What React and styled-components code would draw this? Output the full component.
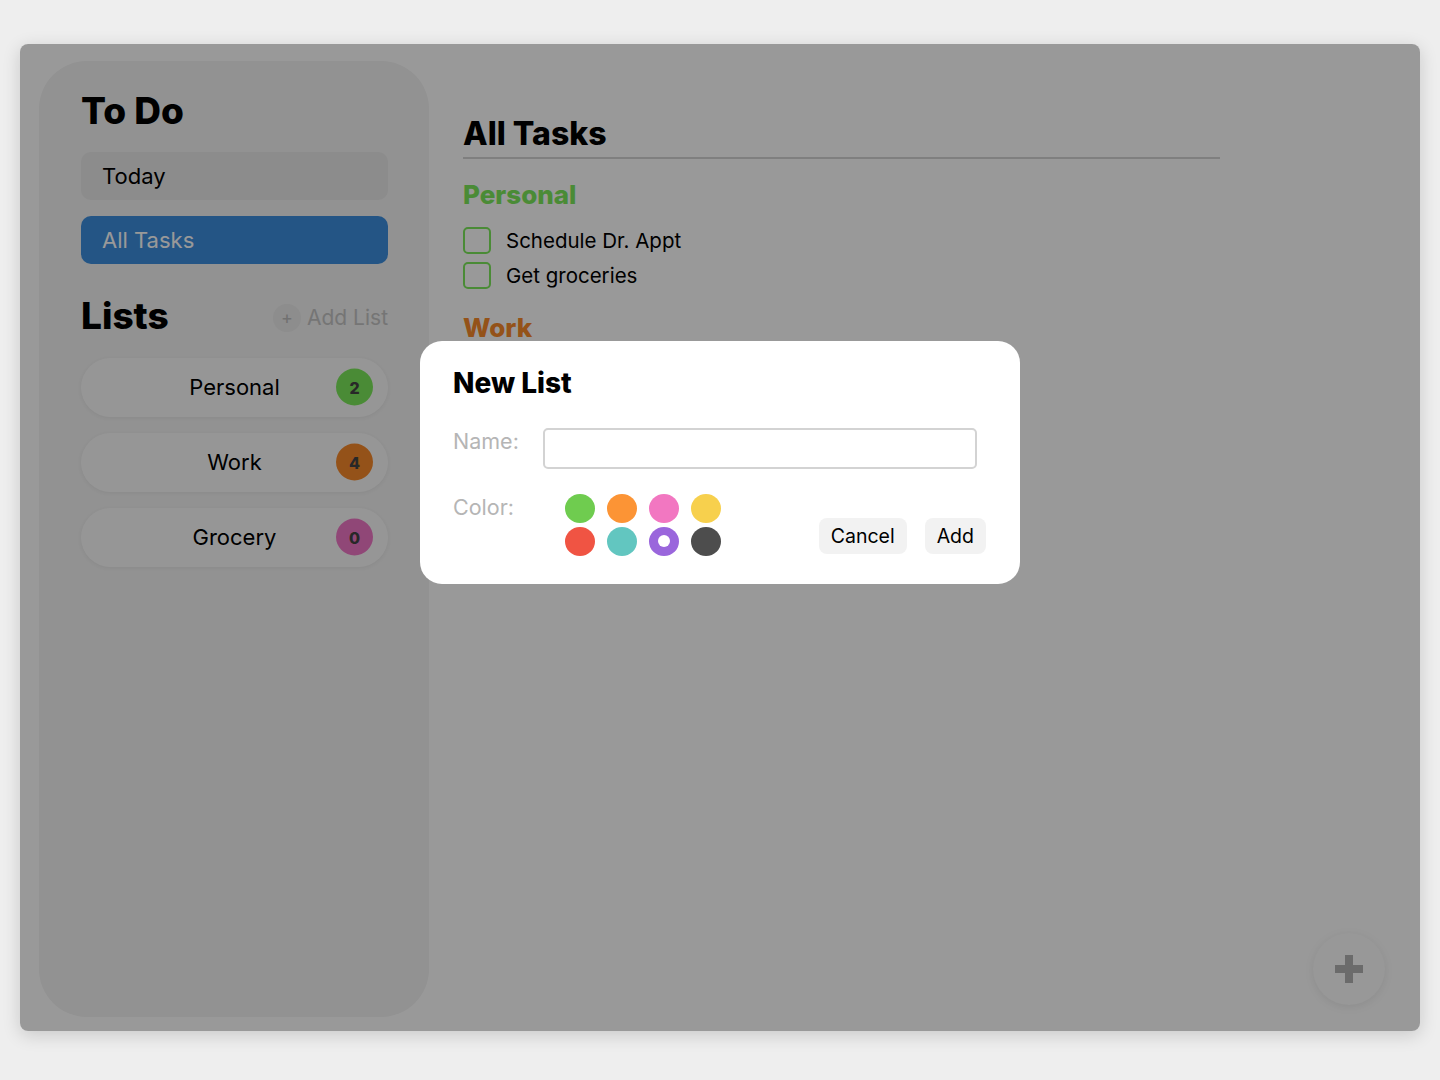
import React from 'react'
import styled, { createGlobalStyle } from 'styled-components'

const GlobalStyle = createGlobalStyle`
    html, body {
        margin: 0;
        padding: 0;
        background: #eeeeee;
        font-family: Inter, "Noto Sans", sans-serif;
    }
`

const Page = styled.div`
    padding: 44px 20px 48px 20px;
    box-sizing: border-box;
    height: 1080px;
`

const AppWindow = styled.div`
    position: relative;
    display: flex;
    height: 987px;
    background: #ffffff;
    border-radius: 8px;
    overflow: hidden;
    box-shadow: 0 4px 18px rgba(0, 0, 0, 0.16);
    padding: 17px 0 14px 19px;
    box-sizing: border-box;
`

const Sidebar = styled.aside`
    width: 390px;
    flex-shrink: 0;
    background: #f3f3f3;
    border-radius: 48px;
    padding: 28px 41px 0 42px;
    box-sizing: border-box;
`

const Heading = styled.h1`
    font-family: Inter, sans-serif;
    font-weight: 800;
    font-size: ${p => p.size || 36}px;
    letter-spacing: 0;
    line-height: 1.2;
    margin: 0;
    color: ${p => p.color || '#000000'};
`

const NavButton = styled.div`
    height: 48px;
    border-radius: 10px;
    display: flex;
    align-items: center;
    padding-left: 21px;
    font-size: 22px;
    margin-top: ${p => p.gap}px;
    background: ${p => (p.active ? '#3c8ede' : '#e9e9e9')};
    color: ${p => (p.active ? '#ffffff' : '#000000')};
`

const ListsHeader = styled.div`
    display: flex;
    align-items: center;
    justify-content: space-between;
    margin-top: 30px;
`

const AddList = styled.div`
    display: flex;
    align-items: center;
    gap: 6px;
    font-size: 21px;
    color: #c4c4c4;
    margin-top: 2px;
`

const AddCircle = styled.span`
    width: 28px;
    height: 28px;
    border-radius: 50%;
    background: #ebebeb;
    display: flex;
    align-items: center;
    justify-content: center;
    font-size: 18px;
    color: #bcbcbc;
`

const ListStack = styled.div`
    display: flex;
    flex-direction: column;
    gap: 16px;
    margin-top: 19px;
`

const ListPill = styled.div`
    position: relative;
    height: 59px;
    border-radius: 30px;
    background: #fbfbfb;
    box-shadow: 0 1px 4px rgba(0, 0, 0, 0.06);
    display: flex;
    align-items: center;
    justify-content: center;
    font-size: 22px;
    color: #000000;
`

const Badge = styled.span`
    position: absolute;
    right: 15px;
    top: 50%;
    transform: translateY(-50%);
    width: 37px;
    height: 37px;
    border-radius: 50%;
    background: ${p => p.color};
    display: flex;
    align-items: center;
    justify-content: center;
    font-size: 16px;
    font-weight: 800;
    color: #444444;
`

const Main = styled.main`
    flex: 1;
    padding: 54px 200px 0 34px;
`

const MainTitle = styled.div`
    border-bottom: 2px solid #d4d4d4;
    padding-bottom: 4px;
`

const Section = styled.div`
    margin-top: ${p => p.top}px;
`

const TaskRow = styled.label`
    display: flex;
    align-items: center;
    gap: 15px;
    font-size: 20.5px;
    color: #000000;
    height: 28px;
    margin-top: ${p => p.top}px;
`

const Check = styled.span`
    width: 28px;
    height: 27px;
    box-sizing: border-box;
    border: 2px solid ${p => p.color};
    border-radius: 5px;
`

const Overlay = styled.div`
    position: absolute;
    inset: 0;
    background: rgba(0, 0, 0, 0.4);
    display: flex;
    justify-content: center;
    align-items: flex-start;
    padding-top: 297px;
`

const Modal = styled.div`
    width: 600px;
    height: 243px;
    box-sizing: border-box;
    background: #ffffff;
    border-radius: 22px;
    padding: 26px 33px 0 33px;
`

const FieldRow = styled.div`
    display: flex;
    align-items: flex-start;
    margin-top: ${p => p.top}px;
`

const Label = styled.span`
    font-size: 21.5px;
    line-height: 26px;
    color: #b5b5b5;
    width: 90px;
    flex-shrink: 0;
`

const NameInput = styled.input`
    width: 434px;
    height: 41px;
    box-sizing: border-box;
    border: 2px solid #d3d3d3;
    border-radius: 5px;
    outline: none;
`

const Swatches = styled.div`
    display: grid;
    grid-template-columns: repeat(4, 30px);
    column-gap: 12px;
    row-gap: 4px;
    margin-left: 22px;
`

const Swatch = styled.span`
    width: 30px;
    height: 29px;
    border-radius: 50%;
    background: ${p => p.color};
    display: flex;
    align-items: center;
    justify-content: center;

    &::after {
        content: '';
        display: ${p => (p.selected ? 'block' : 'none')};
        width: 12px;
        height: 12px;
        border-radius: 50%;
        background: #ffffff;
    }
`

const Buttons = styled.div`
    margin-left: auto;
    display: flex;
    gap: 18px;
    margin-top: 24px;
    margin-right: 1px;
`

const ModalButton = styled.button`
    height: 36px;
    padding: 0 12px;
    border: none;
    border-radius: 8px;
    background: #f2f2f2;
    font-family: Inter, sans-serif;
    font-size: 19.5px;
    color: #000000;
`

const Fab = styled.div`
    position: absolute;
    right: 35px;
    bottom: 26px;
    width: 72px;
    height: 72px;
    border-radius: 50%;
    background: #fdfdfd;
    box-shadow: 0 2px 10px rgba(0, 0, 0, 0.08);
    display: flex;
    align-items: center;
    justify-content: center;
`

const lists = [
    { name: 'Personal', count: 2, color: '#7ce85a' },
    { name: 'Work', count: 4, color: '#f7892a' },
    { name: 'Grocery', count: 0, color: '#f077c6' },
]

const swatchColors = ['#6fcc4f', '#fc9435', '#f277c1', '#f7d04d', '#f05443', '#62c6c0', '#9a66dc', '#4d4d4d']

const App = () => (
    <Page>
        <GlobalStyle />
        <AppWindow>
            <Sidebar>
                <Heading size={37}>To Do</Heading>
                <NavButton gap={19}>Today</NavButton>
                <NavButton gap={16} active>All Tasks</NavButton>
                <ListsHeader>
                    <Heading size={37}>Lists</Heading>
                    <AddList>
                        <AddCircle>+</AddCircle>
                        Add List
                    </AddList>
                </ListsHeader>
                <ListStack>
                    {lists.map(l => (
                        <ListPill key={l.name}>
                            {l.name}
                            <Badge color={l.color}>{l.count}</Badge>
                        </ListPill>
                    ))}
                </ListStack>
            </Sidebar>
            <Main>
                <MainTitle>
                    <Heading size={32}>All Tasks</Heading>
                </MainTitle>
                <Section top={20}>
                    <Heading size={26} color="#7ce85a">Personal</Heading>
                    <TaskRow top={16}><Check color="#7ce85a" />Schedule Dr. Appt</TaskRow>
                    <TaskRow top={7}><Check color="#7ce85a" />Get groceries</TaskRow>
                </Section>
                <Section top={22}>
                    <Heading size={26} color="#f7892a">Work</Heading>
                </Section>
            </Main>
            <Fab>
                <svg width="28" height="28" viewBox="0 0 28 28">
                    <path d="M10 0h8v10h10v8H18v10h-8V18H0v-8h10z" fill="#b3b3b3" />
                </svg>
            </Fab>
            <Overlay>
                <Modal>
                    <Heading size={28}>New List</Heading>
                    <FieldRow top={27}>
                        <Label>Name:</Label>
                        <NameInput />
                    </FieldRow>
                    <FieldRow top={25}>
                        <Label>Color:</Label>
                        <Swatches>
                            {swatchColors.map((c, i) => (
                                <Swatch key={c} color={c} selected={i === 6} />
                            ))}
                        </Swatches>
                        <Buttons>
                            <ModalButton>Cancel</ModalButton>
                            <ModalButton>Add</ModalButton>
                        </Buttons>
                    </FieldRow>
                </Modal>
            </Overlay>
        </AppWindow>
    </Page>
)

export default App
